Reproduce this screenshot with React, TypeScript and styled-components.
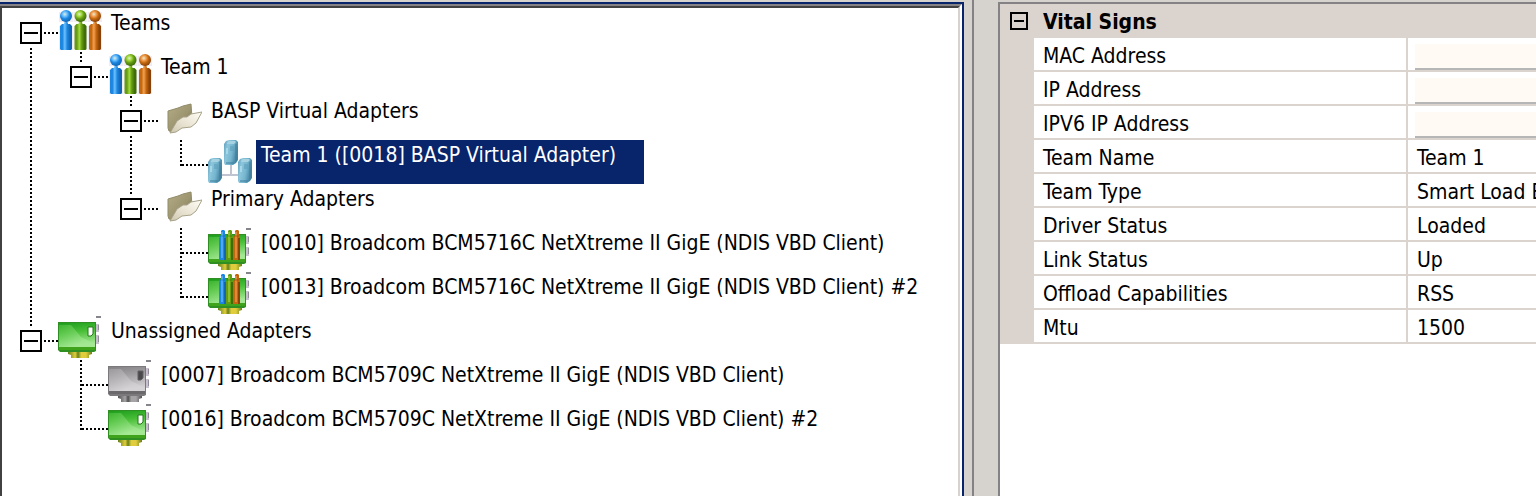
import React, { useId, useState } from "react";
import styled, { createGlobalStyle, css } from "styled-components";

const GlobalStyle = createGlobalStyle`
  *, *::before, *::after { box-sizing: border-box; }
  body {
    margin: 0;
    background: #d6d3ce;
    color: #000;
    font: 21px/30px "DejaVu Sans Condensed", "DejaVu Sans", sans-serif;
    font-stretch: condensed;
  }
`;

const Window = styled.div`
  display: grid;
  grid-template-columns: minmax(0, 964fr) 34px minmax(0, 538fr);
  min-height: 100vh;
  padding-top: 2px;
  overflow: hidden;
`;

const TreeFrame = styled.div`
  display: grid;
  border-top: 2px solid #08246b;
  border-right: 2px solid #08246b;
`;

const TreePane = styled.nav`
  border-top: 2px solid #848284;
  border-right: 2px solid #fff;
  background: #fff;
  display: grid;
`;

const TreeInner = styled.div`
  border-top: 2px solid #424142;
  border-left: 2px solid #424142;
  border-right: 2px solid #d6d3ce;
  padding-left: 6px;
  overflow: hidden;
`;

const Splitter = styled.div`
  margin-top: -2px;
  margin-left: 8px;
  border-left: 2px solid #848284;
`;

const TreeList = styled.ul`
  list-style: none;
  margin: 0;
  padding: 0;
`;

const TreeRow = styled.div`
  display: flex;
  height: 44px;
`;

type Line = "none" | "full" | "top" | "bottom";

const dotsDown = "repeating-linear-gradient(to bottom, #000 0 2px, #fff 2px 4px)";
const dotsAcross = "repeating-linear-gradient(to right, #fff 0 2px, #000 2px 4px)";

const lineSize: Record<Line, string> = {
  none: "0 0",
  full: "2px 44px",
  top: "2px 26px",
  bottom: "2px 8px",
};

const Guide = styled.span<{ $line: Line; $across?: boolean }>`
  flex: none;
  width: 50px;
  padding: 14px 0 0 12px;
  background-image: ${dotsDown}, ${dotsAcross};
  background-repeat: no-repeat;
  background-position: 22px ${(p) => (p.$line === "bottom" ? "36px" : "0")}, 22px 24px;
  background-size: ${(p) => lineSize[p.$line]}, ${(p) => (p.$across ? "28px 2px" : "0 0")};
`;

const ExpandButton = styled.button<{ $small?: boolean }>`
  display: grid;
  place-items: center;
  width: ${(p) => (p.$small ? 18 : 22)}px;
  height: ${(p) => (p.$small ? 18 : 22)}px;
  padding: 0;
  border: 2px solid #000;
  background: ${(p) => (p.$small ? "transparent" : "#fff")};
  ${(p) => !p.$small && css`outline: 2px solid #fff;`}
`;

const Mark = styled.svg`
  display: block;
`;

const IconBox = styled.svg`
  flex: none;
  width: 44px;
  height: 44px;
  margin-right: 4px;
`;

const Label = styled.a<{ $selected?: boolean }>`
  padding: 0 ${(p) => (p.$selected ? 28 : 5)}px 0 5px;
  background: ${(p) => (p.$selected ? "#08246b" : "transparent")};
  color: ${(p) => (p.$selected ? "#fff" : "#000")};
  text-decoration: none;
  white-space: nowrap;
`;

const DetailPane = styled.main`
  border-top: 2px solid #848284;
  border-left: 2px solid #848284;
  background: #fff;
  overflow: hidden;
`;

const Grid = styled.table`
  width: 100%;
  table-layout: fixed;
  border-collapse: separate;
  border-spacing: 0;
  line-height: 28px;
`;

const GutterCol = styled.col`
  width: 34px;
`;

const NameCol = styled.col`
  width: 374px;
`;

const GroupHead = styled.th`
  height: 34px;
  padding: 0;
  background: #dbd3ce;
  text-align: left;
`;

const GroupTitle = styled.div`
  display: flex;
  align-items: center;
  gap: 15px;
  height: 34px;
  padding-left: 10px;
`;

const GroupName = styled.span`
  padding-top: 2px;
`;

const Gutter = styled.td`
  padding: 0;
  background: #dbd3ce;
`;

const NameCell = styled.th`
  height: 34px;
  padding: 4px 0 0 9px;
  border-right: 2px solid #dbd3ce;
  border-bottom: 2px solid #dbd3ce;
  font-weight: 400;
  text-align: left;
  white-space: nowrap;
`;

const ValueCell = styled.td<{ $field?: boolean }>`
  height: 34px;
  padding: ${(p) => (p.$field ? "0 0 0 7px" : "4px 0 0 9px")};
  border-bottom: 2px solid #dbd3ce;
  vertical-align: ${(p) => (p.$field ? "bottom" : "middle")};
  white-space: nowrap;
  overflow: hidden;
`;

const BlankField = styled.input`
  display: block;
  width: 100%;
  height: 26px;
  padding: 0;
  border: 0;
  border-bottom: 2px solid #b5b6b5;
  background: #fffaf4;
  font: inherit;
`;

function Minus({ width, open }: { width: number; open: boolean }) {
  return (
    <Mark width={width} height={width} viewBox={`0 0 ${width} ${width}`} aria-hidden="true" shapeRendering="crispEdges">
      <path d={`M0 ${width / 2}H${width}${open ? "" : `M${width / 2} 0V${width}`}`} stroke="#000" strokeWidth="2" />
    </Mark>
  );
}

type IconKind = "people" | "folder" | "virtual" | "teamed" | "green" | "gray";

const personColors = [
  ["#1266b4", "#6cc0ff", "#1c86e0"],
  ["#3f6c08", "#a5dc3c", "#649c14"],
  ["#8a4208", "#f4a050", "#c4680f"],
];

function People() {
  const id = useId();
  return (
    <>
      {personColors.map(([dark, light, mid], i) => {
        const x = 2 + i * 14.5;
        return (
          <g key={mid}>
            <defs>
              <linearGradient id={`${id}b${i}`}>
                <stop offset="0" stopColor={mid} />
                <stop offset=".2" stopColor={mid} />
                <stop offset=".4" stopColor={light} />
                <stop offset=".6" stopColor={mid} />
                <stop offset=".85" stopColor={dark} />
                <stop offset="1" stopColor={dark} />
              </linearGradient>
              <radialGradient id={`${id}h${i}`} cx=".4" cy=".35" r=".65">
                <stop offset="0" stopColor="#e0eeda" />
                <stop offset=".3" stopColor={light} />
                <stop offset=".6" stopColor={mid} />
                <stop offset="1" stopColor={dark} />
              </radialGradient>
            </defs>
            <path d="M0 4h14v10H0zM0 18h14v24H0z" transform={`translate(${x - 1})`} fill="#d8d0e0" opacity=".4" />
            <path d={`M${x} 41V18l2-2h2l1-4h2l1 4h2l2 2v23l-1 1H${x + 1}z`} fill={`url(#${id}b${i})`} />
            <circle cx={x + 6} cy="8" r="6" fill={`url(#${id}h${i})`} />
          </g>
        );
      })}
    </>
  );
}

function Folder() {
  const id = useId();
  return (
    <>
      <defs>
        <linearGradient id={`${id}f`} x2="1" y2="1">
          <stop offset="0" stopColor="#b3ac86" />
          <stop offset=".55" stopColor="#9c9570" />
          <stop offset="1" stopColor="#6b6747" />
        </linearGradient>
        <linearGradient id={`${id}p`} x1="0" y1="1" x2="1" y2="0">
          <stop offset="0" stopColor="#cdc6ae" />
          <stop offset=".4" stopColor="#e6e0cf" />
          <stop offset="1" stopColor="#fffdf4" />
        </linearGradient>
      </defs>
      <path d="M10 15l10-3 5-2 8-2 1 14-19 14-4-1-1-3z" fill={`url(#${id}f)`} stroke="#918b68" />
      <path d="M12 37l7-12 6-4h4l4-3 11-2-6 11-5 4-9 1-6 4z" fill={`url(#${id}p)`} stroke="#a8a28a" />
    </>
  );
}

function Virtual() {
  const id = useId();
  return (
    <>
      <defs>
        <linearGradient id={`${id}v`} y2=".3">
          <stop offset="0" stopColor="#5f9fbc" />
          <stop offset=".3" stopColor="#8cc6dc" />
          <stop offset=".65" stopColor="#76b6cf" />
          <stop offset="1" stopColor="#4584a2" />
        </linearGradient>
      </defs>
      <path d="M23 25v10M14 35h17" stroke="#c0c4d0" strokeWidth="2" />
      {[[16, 0], [0, 18], [30, 18]].map(([x, y]) => (
        <g key={x}>
          <path d={`M${x} ${y + 4}l2-3 3-1h7l2 2v18l-2 3-3 2h-8l-1-2z`} fill={`url(#${id}v)`} />
          <path d={`M${x + 3} ${y + 3}l2-2h6l1 1-2 2h-7z`} fill="#a6d2e2" />
          <path d={`M${x + 3} ${y + 8}v6`} stroke="#a8d8e8" strokeWidth="2" />
          <path d={`M${x + 6} ${y + 6}h4v5h-4z`} fill="#5f9fbb" opacity=".6" />
          <path d={`M${x + 12} ${y + 4}v17M${x + 2} ${y + 23}h8`} stroke="#417f9c" />
        </g>
      ))}
    </>
  );
}

function Card({ gray, team }: { gray?: boolean; team?: boolean }) {
  const id = useId();
  const c = gray
    ? { edge: "#7b797b", top: "#848284", base: "#a5a2a5", glow: "#d6d3d6", foot: "#6b696b", pin: "#a5a3a5", pinEdge: "#525152", hole: "#4a494a" }
    : { edge: "#2f8f22", top: "#1c9c1c", base: "#4abf38", glow: "#a4e894", foot: "#3fa41c", pin: "#e0cc3c", pinEdge: "#66801a", hole: "#fff" };
  return (
    <>
      <defs>
        <linearGradient id={`${id}c`} x2=".2" y2="1">
          <stop offset="0" stopColor={c.top} />
          <stop offset=".45" stopColor={c.base} />
          <stop offset="1" stopColor={c.glow} />
        </linearGradient>
        <linearGradient id={`${id}g`} x2="1" y2="1">
          <stop offset="0" stopColor={c.base} />
          <stop offset=".7" stopColor={c.glow} />
          <stop offset="1" stopColor={c.glow} />
        </linearGradient>
        <linearGradient id={`${id}p`}>
          <stop offset="0" stopColor={c.pinEdge} />
          <stop offset=".3" stopColor={c.pin} />
          <stop offset=".42" stopColor={c.pinEdge} />
          <stop offset=".55" stopColor={c.pin} />
          <stop offset=".75" stopColor={c.pin} />
          <stop offset="1" stopColor={c.pinEdge} />
        </linearGradient>
      </defs>
      <path d="M38 1h5" stroke="#84868c" strokeWidth="2" />
      <path d="M38 8h3v8h-3zM38 19h3v9h-3z" fill="#c8c0cf" />
      <path d="M40 9h1v5h-1zM40 20h1v6h-1z" fill="#928c98" />
      <path d="M10 35h24v3l-3 1v3H13v-3l-3-1z" fill={`url(#${id}p)`} />
      <path d="M0 6h38v29l-2 1H2l-2-2z" fill={c.edge} />
      <path d="M1 7h36v24H1z" fill={`url(#${id}c)`} />
      <path d="M1 9h12l10 12 14 7v3H1z" fill={`url(#${id}g)`} opacity=".65" />
      <path d="M1 31h36v3H1z" fill={c.foot} />
      {!team && <path d="M30 11h5v7l-2 2h-3z" fill={c.hole} stroke={gray ? "#636163" : "#217918"} />}
      {team &&
        personColors.map(([dark, light, mid], i) => (
          <g key={mid}>
            <path d={`M${11 + i * 7} 32V10l2-3V3l1-1h2l1 1v4l1 3v22z`} fill={mid} />
            <path d={`M${17 + i * 7} 10v22`} stroke={dark} strokeWidth="2" />
            <path d={`M${14 + i * 7} 4v26`} stroke={light} strokeWidth="2" opacity=".6" />
            <path d={`M${12 + i * 7} 8h5`} stroke={dark} opacity=".6" />
          </g>
        ))}
    </>
  );
}

function Icon({ kind }: { kind: IconKind }) {
  return (
    <IconBox viewBox="0 0 44 44" aria-hidden="true">
      {kind === "people" && <People />}
      {kind === "folder" && <Folder />}
      {kind === "virtual" && <Virtual />}
      {kind === "teamed" && <Card team />}
      {kind === "green" && <Card />}
      {kind === "gray" && <Card gray />}
    </IconBox>
  );
}

interface TreeNode {
  label: string;
  icon: IconKind;
  selected?: boolean;
  children?: TreeNode[];
}

const tree: TreeNode[] = [
  {
    label: "Teams",
    icon: "people",
    children: [
      {
        label: "Team 1",
        icon: "people",
        children: [
          {
            label: "BASP Virtual Adapters",
            icon: "folder",
            children: [{ label: "Team 1 ([0018] BASP Virtual Adapter)", icon: "virtual", selected: true }],
          },
          {
            label: "Primary Adapters",
            icon: "folder",
            children: [
              { label: "[0010] Broadcom BCM5716C NetXtreme II GigE (NDIS VBD Client)", icon: "teamed" },
              { label: "[0013] Broadcom BCM5716C NetXtreme II GigE (NDIS VBD Client) #2", icon: "teamed" },
            ],
          },
        ],
      },
    ],
  },
  {
    label: "Unassigned Adapters",
    icon: "green",
    children: [
      { label: "[0007] Broadcom BCM5709C NetXtreme II GigE (NDIS VBD Client)", icon: "gray" },
      { label: "[0016] Broadcom BCM5709C NetXtreme II GigE (NDIS VBD Client) #2", icon: "green" },
    ],
  },
];

interface BranchProps {
  node: TreeNode;
  guides: Line[];
  first: boolean;
  last: boolean;
}

function Branch({ node, guides, first, last }: BranchProps) {
  const [open, setOpen] = useState(true);
  const isRoot = guides.length === 0;
  let line: Line = last ? "top" : "full";
  if (isRoot && first) line = "bottom";
  return (
    <li>
      <TreeRow>
        {guides.map((g, i) => (
          <Guide key={i} $line={g} />
        ))}
        <Guide $line={line} $across>
          {node.children && (
            <ExpandButton
              type="button"
              aria-expanded={open}
              aria-label={`Toggle ${node.label}`}
              onClick={() => setOpen(!open)}
            >
              <Minus width={14} open={open} />
            </ExpandButton>
          )}
        </Guide>
        <Icon kind={node.icon} />
        <Label href="#" $selected={node.selected}>
          {node.label}
        </Label>
      </TreeRow>
      {node.children && open && <Branches nodes={node.children} guides={[...guides, last ? "none" : "full"]} />}
    </li>
  );
}

function Branches({ nodes, guides }: { nodes: TreeNode[]; guides: Line[] }) {
  return (
    <TreeList>
      {nodes.map((n, i) => (
        <Branch key={n.label} node={n} guides={guides} first={i === 0} last={i === nodes.length - 1} />
      ))}
    </TreeList>
  );
}

const vitals: [string, string | null][] = [
  ["MAC Address", null],
  ["IP Address", null],
  ["IPV6 IP Address", null],
  ["Team Name", "Team 1"],
  ["Team Type", "Smart Load B"],
  ["Driver Status", "Loaded"],
  ["Link Status", "Up"],
  ["Offload Capabilities", "RSS"],
  ["Mtu", "1500"],
];

function VitalSigns() {
  const [open, setOpen] = useState(true);
  return (
    <Grid>
      <colgroup>
        <GutterCol />
        <NameCol />
        <col />
      </colgroup>
      <thead>
        <tr>
          <GroupHead colSpan={3} scope="colgroup">
            <GroupTitle>
              <ExpandButton
                $small
                type="button"
                aria-expanded={open}
                aria-label="Toggle Vital Signs"
                onClick={() => setOpen(!open)}
              >
                <Minus width={10} open={open} />
              </ExpandButton>
              <GroupName>Vital Signs</GroupName>
            </GroupTitle>
          </GroupHead>
        </tr>
      </thead>
      {open && (
        <tbody>
          {vitals.map(([name, value]) => (
            <tr key={name}>
              <Gutter />
              <NameCell scope="row">{name}</NameCell>
              <ValueCell $field={value === null}>
                {value === null ? <BlankField readOnly aria-label={name} /> : value}
              </ValueCell>
            </tr>
          ))}
        </tbody>
      )}
    </Grid>
  );
}

export default function App() {
  return (
    <>
      <GlobalStyle />
      <Window>
        <TreeFrame>
          <TreePane aria-label="Adapters">
            <TreeInner>
              <Branches nodes={tree} guides={[]} />
            </TreeInner>
          </TreePane>
        </TreeFrame>
        <Splitter />
        <DetailPane>
          <VitalSigns />
        </DetailPane>
      </Window>
    </>
  );
}
